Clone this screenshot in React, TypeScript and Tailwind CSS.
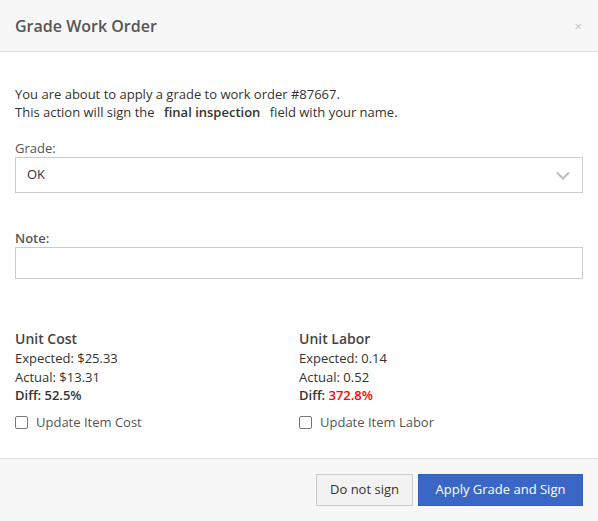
import { useState } from 'react';

// Grade work order modal
const Stat = ({ title, expected, actual, diff, diffRed, label }: { title: string; expected: string; actual: string; diff: string; diffRed?: boolean; label: string }) => {
  const [checked, setChecked] = useState(false);
  return (
    <div className="flex-1">
      <div className="text-[14px] leading-[20px] font-semibold text-[#444]">{title}</div>
      <div className="leading-[18.5px]">Expected: {expected}</div>
      <div className="leading-[18.5px]">Actual: {actual}</div>
      <div className="leading-[18.5px] font-semibold">
        Diff: <span className={diffRed ? 'text-[#ff0000]' : ''}>{diff}</span>
      </div>
      <label className="mt-[8px] flex items-center gap-[8px] text-[#555]">
        <input
          type="checkbox"
          checked={checked}
          onChange={() => setChecked(!checked)}
          className="w-[13px] h-[13px] m-0 appearance-none border border-[#777] rounded-[2px] bg-white"
        />
        <span>{label}</span>
      </label>
    </div>
  );
};

export default function App() {
  return (
    <div className="w-[598px] h-[521px] bg-white flex flex-col text-[13px] text-[#333] font-['Open_Sans',sans-serif]">
      <header className="h-[52px] shrink-0 bg-[#f7f7f7] border-b border-[#e3e3e3] flex items-center justify-between px-[15px]">
        <h1 className="text-[16px] font-semibold text-[#555]">Grade Work Order</h1>
        <span className="text-[#c2c2c2] text-[13px] leading-none mr-[1px] mt-[2px]">×</span>
      </header>

      <div className="flex-1 px-[15px] pt-[33px]">
        <p className="leading-[18px]">You are about to apply a grade to work order #87667.</p>
        <p className="leading-[18px]">
          This action will sign the <strong className="font-semibold px-[6px]">final inspection</strong> field with your name.
        </p>

        <div className="mt-[18px] leading-[18px] text-[#555]">Grade:</div>
        <div className="h-[36px] w-[568px] border border-[#cccccc] flex items-center justify-between pl-[11px] pr-[12px]">
          <span>OK</span>
          <svg width="14" height="9" viewBox="0 0 14 9" fill="none" stroke="#bdbdbd" strokeWidth="2">
            <path d="M1 1.5l6 6 6-6" />
          </svg>
        </div>

        <div className="mt-[36px] leading-[18px] font-semibold text-[#555]">Note:</div>
        <input className="h-[32px] w-[568px] border border-[#cccccc] px-[10px] outline-none" />

        <div className="mt-[50px] flex">
          <Stat title="Unit Cost" expected="$25.33" actual="$13.31" diff="52.5%" label="Update Item Cost" />
          <Stat title="Unit Labor" expected="0.14" actual="0.52" diff="372.8%" diffRed label="Update Item Labor" />
        </div>
      </div>

      <footer className="h-[63px] shrink-0 bg-[#f7f7f7] border-t border-[#e3e3e3] flex items-center justify-end gap-[5px] pr-[15px]">
        <button className="h-[32px] w-[97px] bg-[#f2f2f2] border border-[#cccccc] text-[#333]">Do not sign</button>
        <button className="h-[32px] w-[165px] bg-[#3a67c5] border border-[#3360bd] text-white">Apply Grade and Sign</button>
      </footer>
    </div>
  );
}
